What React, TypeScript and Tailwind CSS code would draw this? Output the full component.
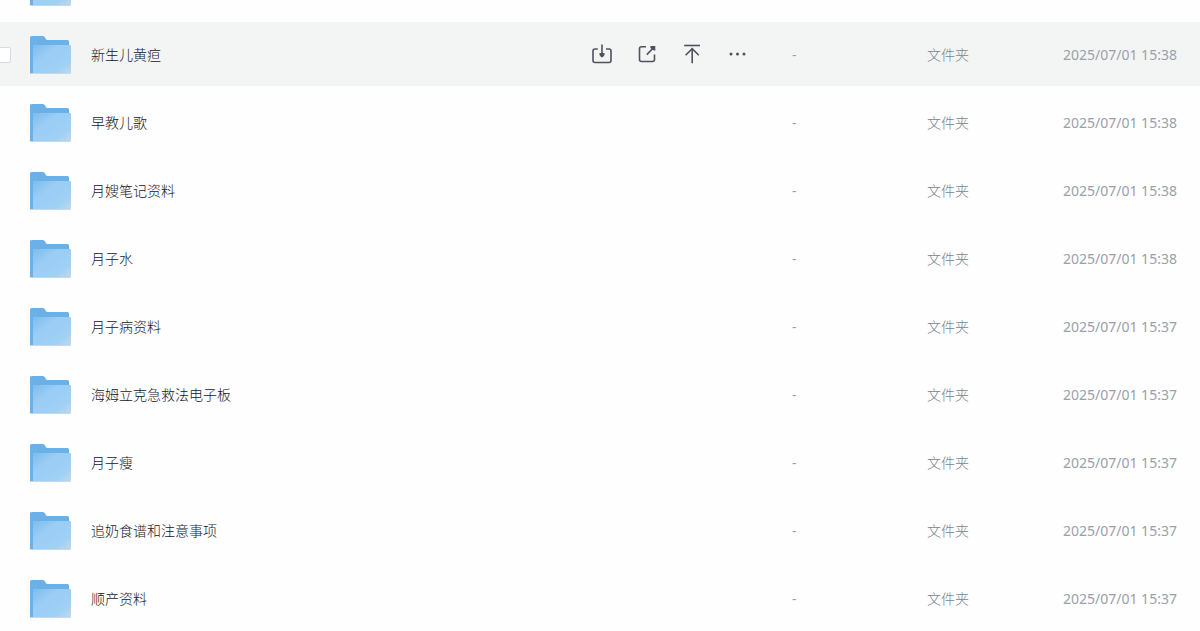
import type { ReactNode } from "react";

type Entry = { name: string; date: string; active?: boolean };

const entries: Entry[] = [
  { name: "", date: "" },
  { name: "新生儿黄疸", date: "2025/07/01 15:38", active: true },
  { name: "早教儿歌", date: "2025/07/01 15:38" },
  { name: "月嫂笔记资料", date: "2025/07/01 15:38" },
  { name: "月子水", date: "2025/07/01 15:38" },
  { name: "月子病资料", date: "2025/07/01 15:37" },
  { name: "海姆立克急救法电子板", date: "2025/07/01 15:37" },
  { name: "月子瘦", date: "2025/07/01 15:37" },
  { name: "追奶食谱和注意事项", date: "2025/07/01 15:37" },
  { name: "顺产资料", date: "2025/07/01 15:37" },
];

function FolderIcon() {
  return (
    <svg className="mt-[2px] h-[38px] w-[41px] shrink-0" viewBox="0 0 41 38" aria-hidden="true">
      <defs>
        <linearGradient id="front" x1="0" y1="0" x2="1" y2="1">
          <stop offset="0" stopColor="#7dbcec" />
          <stop offset="0.35" stopColor="#9bcdf5" />
          <stop offset="0.75" stopColor="#9fd0f6" />
          <stop offset="1" stopColor="#c4d8e8" />
        </linearGradient>
      </defs>
      <path d="M0 1.5Q0 0 1.5 0H12.5Q14 0 14.8 1.2L16.6 4H37.5Q39 4 39 5.5V37.5H0.5Q0 37.5 0 37Z" fill="#6bb1e8" />
      <path d="M3 9H40Q41 9 41 10V37Q41 37.5 40.5 37.5H3Z" fill="url(#front)" />
      <path d="M1 37.5H40" stroke="#c3d9ea" strokeWidth="1" />
    </svg>
  );
}

function ActionButton({ label, children }: { label: string; children: ReactNode }) {
  return (
    <button type="button" aria-label={label} className="flex size-6 items-center justify-center text-[#50515f]">
      <svg className="size-6" viewBox="0 0 24 24" fill="none" stroke="currentColor" strokeWidth="1.6" aria-hidden="true">
        {children}
      </svg>
    </button>
  );
}

function Actions() {
  return (
    <div className="flex items-center gap-[21px]">
      <ActionButton label="下载">
        <path d="M7.8 7H5Q3 7 3 9V18.5Q3 20.5 5 20.5H19Q21 20.5 21 18.5V9Q21 7 19 7H16" />
        <path d="M12 2.5V13" />
        <path d="M9.5 11H14.5V13L12.8 15.2H11.2L9.5 13Z" fill="currentColor" stroke="none" />
      </ActionButton>
      <ActionButton label="分享">
        <path d="M11 4.7H6.5Q4.5 4.7 4.5 6.7V17.5Q4.5 19.5 6.5 19.5H17.5Q19.5 19.5 19.5 17.5V12.5" />
        <path d="M11.8 12.6L18.5 5.8" />
        <path d="M15.4 4H20.3V8.8L17.8 8L15.4 6Z" fill="currentColor" stroke="none" />
      </ActionButton>
      <ActionButton label="置顶">
        <path d="M4.2 3.5H20" />
        <path d="M12.2 6.5V21.3" />
        <path d="M5.6 13.2L12.2 6.6L18.8 13.2" />
      </ActionButton>
      <ActionButton label="更多">
        <g fill="currentColor" stroke="none">
          <circle cx="6" cy="12" r="1.5" />
          <circle cx="12.5" cy="12" r="1.5" />
          <circle cx="19" cy="12" r="1.5" />
        </g>
      </ActionButton>
    </div>
  );
}

function Row({ entry }: { entry: Entry }) {
  const filled = entry.name !== "";
  return (
    <tr className={entry.active ? "h-16 bg-[#f3f5f5]" : "h-16"}>
      <td className="p-0">
        <div className="flex items-center">
          <div className="flex w-[30px] shrink-0 items-center">
            {entry.active && (
              <input
                type="checkbox"
                aria-label={entry.name}
                className="-ml-[5px] mt-[2px] size-4 appearance-none rounded-[2px] border border-[#d6dae3] bg-white"
              />
            )}
          </div>
          <FolderIcon />
          {filled && (
            <a href="#" className="ml-5 mt-[2px] truncate font-light text-[#14161f]">
              {entry.name}
            </a>
          )}
        </div>
      </td>
      <td className="p-0">{entry.active && <Actions />}</td>
      <td className="px-0 pb-0 pt-[2px]">{filled && "-"}</td>
      <td className="px-0 pb-0 pt-[2px] font-light text-[#7d828c]">{filled && "文件夹"}</td>
      <td className="whitespace-nowrap px-0 pb-0 pt-[2px]">{entry.date}</td>
    </tr>
  );
}

export default function App() {
  return (
    <main className="h-screen overflow-hidden bg-[#fefefe] font-['Noto_Sans','Noto_Sans_CJK_SC',sans-serif] text-sm text-[#9b9fa8]">
      <table className="-mt-[50px] w-full table-fixed border-separate border-spacing-x-0 border-spacing-y-1 text-left">
        <colgroup>
          <col />
          <col className="w-[202px]" />
          <col className="w-[135px]" />
          <col className="w-[136px]" />
          <col className="w-[137px]" />
        </colgroup>
        <tbody>
          {entries.map((entry, index) => (
            <Row key={index} entry={entry} />
          ))}
        </tbody>
      </table>
    </main>
  );
}
